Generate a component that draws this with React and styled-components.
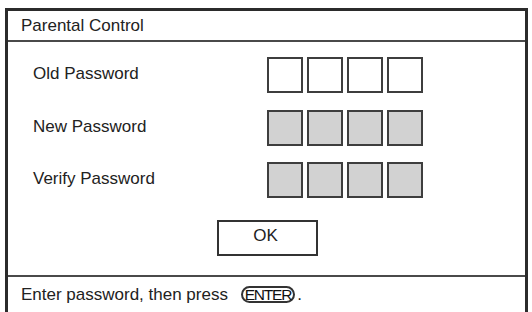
import React from "react";
import styled, { createGlobalStyle } from "styled-components";

const rows = [
  { label: "Old Password", filled: false },
  { label: "New Password", filled: true },
  { label: "Verify Password", filled: true },
];

export default function App() {
  return (
    <>
      <GlobalStyle />
      <Page>
        <Frame>
          <Header>Parental Control</Header>
          <Body>
            <Form>
              {rows.map((row) => (
                <Row key={row.label}>
                  <Label>{row.label}</Label>
                  <Digits>
                    {[0, 1, 2, 3].map((i) => (
                      <Digit key={i} $filled={row.filled} />
                    ))}
                  </Digits>
                </Row>
              ))}
            </Form>
            <OkButton>OK</OkButton>
          </Body>
          <Footer>
            Enter password, then press <Key>ENTER</Key>.
          </Footer>
        </Frame>
      </Page>
    </>
  );
}

const GlobalStyle = createGlobalStyle`
  html, body {
    margin: 0;
    padding: 0;
    background: #fff;
    overflow: hidden;
  }
  body {
    font-family: "Liberation Sans", Arial, sans-serif;
    color: #222;
  }
`;

const Page = styled.div`
  width: 532px;
  height: 312px;
  padding: 8px 4px 0 5px;
  box-sizing: border-box;
  overflow: hidden;
`;

const Frame = styled.div`
  width: 523px;
  height: 310px;
  box-sizing: border-box;
  border: 3px solid #2b2b2b;
  display: flex;
  flex-direction: column;
`;

const Header = styled.div`
  height: 29px;
  display: flex;
  align-items: center;
  padding-left: 13px;
  font-size: 17px;
  border-bottom: 2px solid #4a4a4a;
`;

const Body = styled.div`
  height: 235px;
  display: flex;
  flex-direction: column;
  align-items: center;
  padding-top: 15px;
  box-sizing: border-box;
  border-bottom: 2px solid #4a4a4a;
`;

const Form = styled.div`
  width: 100%;
  display: flex;
  flex-direction: column;
  gap: 16.5px;
`;

const Row = styled.div`
  display: grid;
  grid-template-columns: 234px auto;
  align-items: center;
  padding-left: 25px;
`;

const Label = styled.span`
  font-size: 17px;
  position: relative;
  top: -1px;
`;

const Digits = styled.div`
  display: flex;
  gap: 4px;
`;

const Digit = styled.div`
  width: 36px;
  height: 36px;
  box-sizing: border-box;
  border: 2.5px solid #3e3e3e;
  background: ${(p) => (p.$filled ? "#d2d2d2" : "#fff")};
`;

const OkButton = styled.div`
  margin-top: 22px;
  margin-left: 2px;
  width: 101px;
  height: 36px;
  box-sizing: border-box;
  border: 2px solid #333;
  display: flex;
  align-items: center;
  justify-content: center;
  padding: 0 4px 5px 0;
  font-size: 17px;
`;

const Footer = styled.div`
  flex: 1;
  display: flex;
  align-items: flex-start;
  padding: 8px 0 0 13px;
  font-size: 17px;
  white-space: pre;
`;

const Key = styled.span`
  display: inline-flex;
  align-items: center;
  justify-content: center;
  height: 17px;
  margin: 1px 2px 0 8px;
  padding: 0 2px;
  box-sizing: border-box;
  border: 2px solid #333;
  border-radius: 9px;
  font-size: 15.5px;
  letter-spacing: -1.2px;
  line-height: 1;
  color: #111;
`;
